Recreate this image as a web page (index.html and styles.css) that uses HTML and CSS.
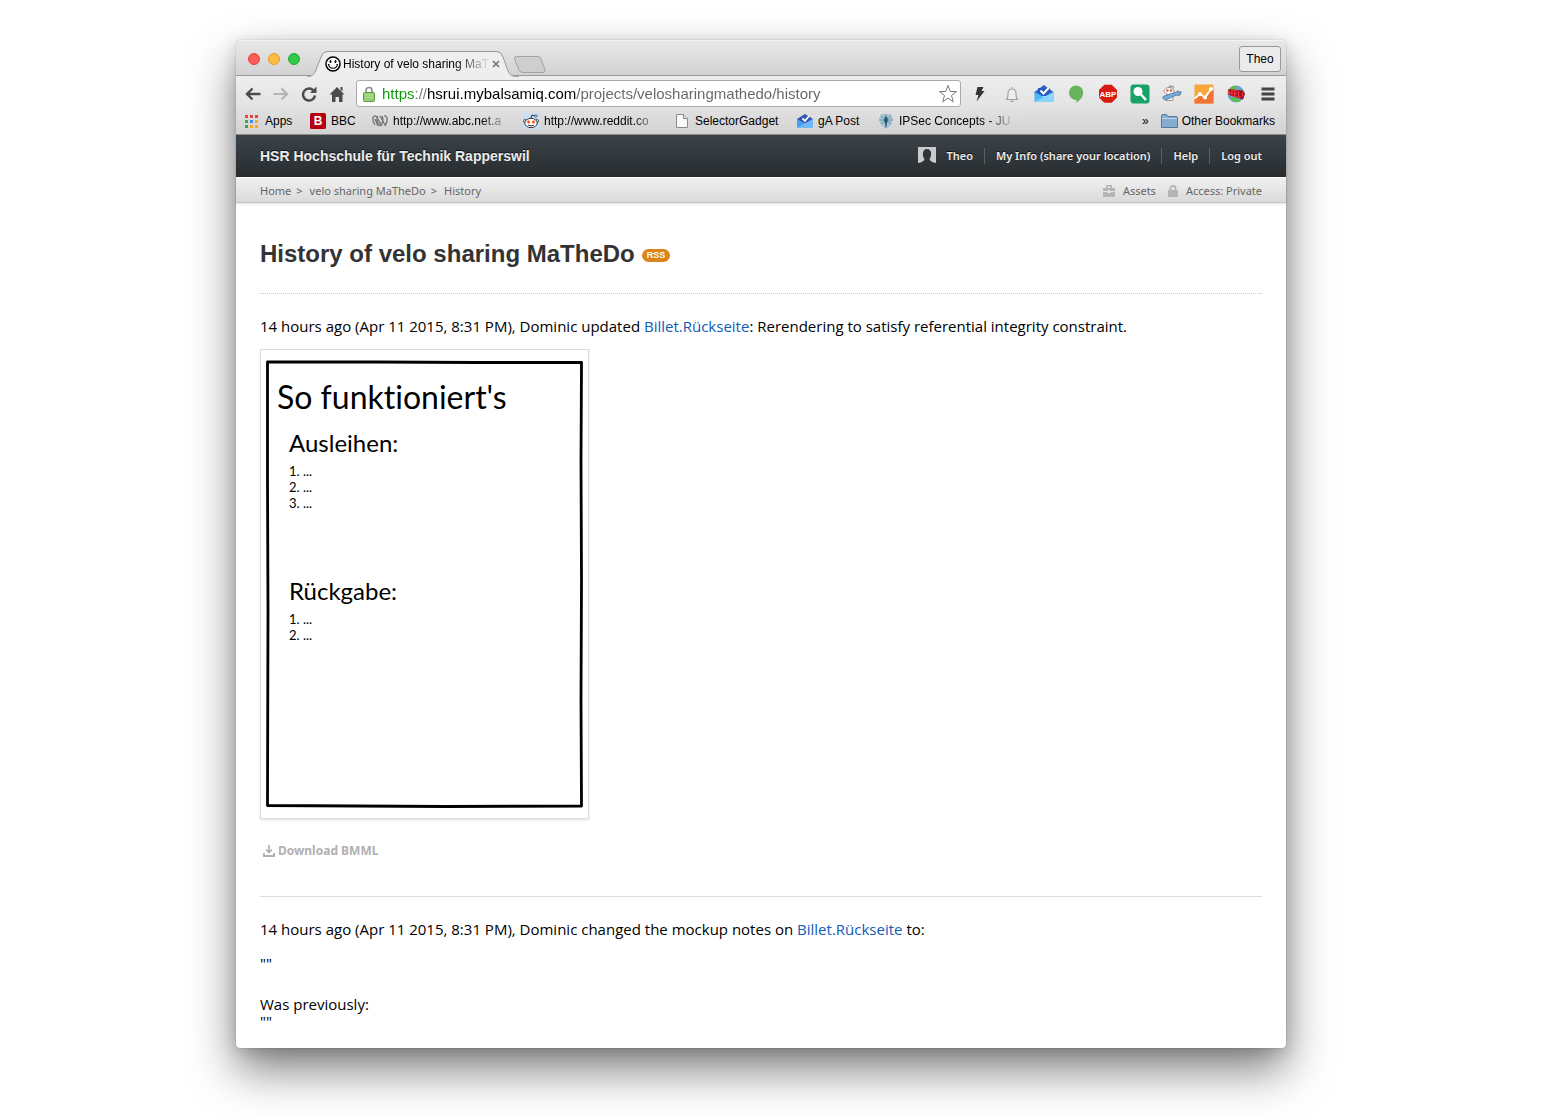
FILE: index.html
```html
<!DOCTYPE html>
<html lang="en">
<head>
<meta charset="utf-8">
<meta name="viewport" content="width=device-width, initial-scale=1">
<title>History of velo sharing MaTheDo</title>
<link rel="stylesheet" href="styles.css">
</head>
<body>
<div class="window">
  <div class="tabstrip">
    <div class="lights">
      <button class="light red" aria-label="Close window"></button>
      <button class="light yellow" aria-label="Minimise window"></button>
      <button class="light green" aria-label="Zoom window"></button>
    </div>
    <div class="tab">
      <svg class="tab-shape" viewBox="0 0 212 26" aria-hidden="true"><path d="M0 26V25.500C5 25.500 7 24 8.500 20L14 6Q16 .5 20 .5H190Q194 .5 196 6L201 20C203 24.500 205 25.500 212 25.500V26Z" fill="#eeeeee"/><path d="M0 25.500C5 25.500 7 24 8.500 20L14 6Q16 .5 20 .5H190Q194 .5 196 6L201 20C203 24.500 205 25.500 212 25.500" fill="none" stroke="#999"/></svg>
      <svg class="icon16 favicon" viewBox="0 0 16 16" aria-hidden="true"><circle cx="8" cy="8" r="7" fill="#fff" stroke="#000" stroke-width="1.500"/><ellipse cx="5.500" cy="5.500" rx="1" ry="1.500"/><ellipse cx="10.500" cy="5.500" rx="1" ry="1.500"/><path d="M3.500 8.500C4.500 13.500 11.500 13.500 12.500 8.500M3 8.500h1.500M11.500 8.500H13" fill="none" stroke="#000" stroke-width="1.200"/></svg>
      <span class="tab-title">History of velo sharing MaT</span>
      <button class="tab-close" aria-label="Close tab"><svg viewBox="0 0 8 8" width="8" height="8"><path d="M1 1l6 6M7 1L1 7" stroke="#777" stroke-width="1.700"/></svg></button>
    </div>
    <button class="new-tab" aria-label="New tab"><svg viewBox="0 0 33 17" width="33" height="17"><path d="M4 .5H25Q27 .5 28 3L32 14Q32.500 16.500 30 16.500H10Q7 16.500 6 14L1.500 3Q1 .5 4 .5Z" fill="#cecece" stroke="#a2a2a2"/></svg></button>
    <button class="profile">Theo</button>
  </div>

  <div class="toolbar">
    <div class="nav">
      <button aria-label="Back"><svg class="icon16" viewBox="0 0 16 16"><path d="M15.500 8H2M7.500 2.500L2 8l5.500 5.500" fill="none" stroke="#4c4c4c" stroke-width="2.400"/></svg></button>
      <button aria-label="Forward"><svg class="icon16" viewBox="0 0 16 16"><path d="M.5 8H14M8.500 2.500L14 8l-5.500 5.500" fill="none" stroke="#b4b4b4" stroke-width="2.200"/></svg></button>
      <button aria-label="Reload"><svg class="icon16" viewBox="0 0 16 16"><path d="M12.500 4.500A6 6 0 1 0 14 9.500" fill="none" stroke="#4c4c4c" stroke-width="2.500"/><path d="M15.500 .5V7H9Z" fill="#4c4c4c"/></svg></button>
      <button aria-label="Home"><svg class="icon16" viewBox="0 0 16 16"><path d="M8 1L15.500 8.500H13.500V16H10V11H6.500V16H3V8.500H.5ZM11.500 1H13.500V5.500L11.500 3.500Z" fill="#4c4c4c"/></svg></button>
    </div>
    <form class="omnibox">
      <svg class="lock" viewBox="0 0 12 16" width="12" height="16" aria-hidden="true"><path d="M3 7V4.500a3 3 0 0 1 6 0V7" fill="none" stroke="#8c8c8c" stroke-width="1.700"/><rect x=".5" y="6.500" width="11" height="9" rx="1" fill="#97d077" stroke="#579e3f"/><path d="M2 9h8M2 11.500h8" stroke="#b2e297"/></svg>
      <input class="url" type="text" aria-label="Address" value="https://hsrui.mybalsamiq.com/projects/velosharingmathedo/history">
      <button type="button" aria-label="Bookmark this page"><svg viewBox="0 0 20 20" width="20" height="20"><path d="M10 1.500l2.300 6h6.200l-5 4 1.800 6.300L10 14.200l-5.300 3.600 1.800-6.300-5-4h6.200Z" fill="#fff" stroke="#777" stroke-linejoin="round"/></svg></button>
    </form>
    <div class="extensions">
      <button aria-label="Lightning"><svg viewBox="0 0 20 20"><path d="M7.500 3H13.500L11.500 7H14.500L6.500 17.500L8.500 11H5.500Z" fill="#333"/></svg></button>
      <button aria-label="Notifications"><svg viewBox="0 0 20 20"><path d="M4.500 15.500C6 14 6 12 6 9.500Q6 5 10 5T14 9.500C14 12 14 14 15.500 15.500ZM10 5V3" fill="#eee" stroke="#a5a5a5" stroke-width="1.200"/><path d="M8.500 16.500h3v1.500h-3Z" fill="#a5a5a5"/></svg></button>
      <button aria-label="Inbox"><svg viewBox="0 0 20 20"><path d="M.5 8L10 1l9.500 7-1 4H1Z" fill="#3062c6"/><path d="M4 4h12v8H4Z" fill="#295ac3"/><path d="M.5 8L10 13l9.500-5V18H.5Z" fill="#4db9f5"/><path d="M.5 18L19.500 8V18Z" fill="#8bd5fa"/><path d="M6.500 6.500l3 3 5.500-6" fill="none" stroke="#fff" stroke-width="2"/></svg></button>
      <button aria-label="Hangouts"><svg viewBox="0 0 20 20"><path d="M10 1.500a7.200 7.200 0 0 1 7.200 7.200c0 4.300-3.200 7.500-6.800 10V15.900A7.200 7.200 0 1 1 10 1.500Z" fill="#69b35d"/></svg></button>
      <button aria-label="Adblock Plus"><svg viewBox="0 0 20 20"><path d="M6.300 .8h7.400l5.300 5.300v7.400l-5.300 5.300H6.300L1 13.500V6.100Z" fill="#d71a12"/><text x="10" y="13" text-anchor="middle" class="abp">ABP</text></svg></button>
      <button aria-label="Search"><svg viewBox="0 0 20 20"><rect x=".5" y=".5" width="19" height="19" rx="3" fill="#17a367"/><circle cx="8" cy="7.500" r="4.500" fill="#fff"/><path d="M11 10.500l5 5.500" stroke="#fff" stroke-width="2.500"/></svg></button>
      <button aria-label="Reddit enhancement"><svg viewBox="0 0 20 20"><path d="M7 5l.5-3 3 .5" stroke="#777" fill="none"/><circle cx="11" cy="3" r="1" fill="#fff" stroke="#777" stroke-width=".6"/><ellipse cx="7" cy="7" rx="5" ry="3.500" fill="#f6f6f6" stroke="#888" stroke-width=".8"/><circle cx="5.300" cy="6.500" r="1.200" fill="#e9622f"/><circle cx="9" cy="6.500" r="1.200" fill="#e9622f"/><path d="M4 11h7v5.500H4Z" fill="#eee" stroke="#888" stroke-width=".8"/><path d="M1 12.500L14.500 8l1.500-1.500v2l3-1v1.500l-1.500 1.500h1l-3 1.500-1-1L3.500 16 1 14.500Z" fill="#78aed8" stroke="#47759a" stroke-width=".8"/></svg></button>
      <button aria-label="Analytics"><svg viewBox="0 0 20 20"><path d="M.5 .5h19v19H.5Z" fill="#f9a63a"/><path d="M.5 15l6-4 5 3 8-9v14.500H.5Z" fill="#f27435"/><path d="M.5 14.500L6 10l5 3.500L17 5" fill="none" stroke="#fff" stroke-width="1.700"/><circle cx="6" cy="10" r="2" fill="#fff"/><circle cx="11" cy="13.500" r="2" fill="#fff"/><circle cx="17" cy="5" r="2" fill="#fff"/></svg></button>
      <button aria-label="Hello"><svg viewBox="0 0 20 20"><circle cx="10" cy="10" r="8.500" fill="#6fa0e0"/><path d="M4 4q3-3 7-2l-2 4-5 1ZM3 13l8 1 4 3q-7 3-12-4M14 4l4 4-3 1Z" fill="#55c443"/><path d="M2 5l14.500 1.500 2.500 3-2 6L3 11Z" fill="#8c1220"/><path d="M3 5v6M6 5.500v6M3 8.500l3 .5M11 6.500H8.500v6H11M8.500 9.500H11M12.500 7v6h2M16.500 8.500v4" fill="none" stroke="#f5303a" stroke-width="1.400"/></svg></button>
      <button aria-label="Menu"><svg viewBox="0 0 20 20"><path d="M3.500 5h13M3.500 10h13M3.500 15h13" stroke="#444" stroke-width="2.800"/></svg></button>
    </div>
  </div>

  <nav class="bookmarks" aria-label="Bookmarks">
    <a href="#" class="bm apps"><svg viewBox="0 0 14 14" width="14" height="14" aria-hidden="true"><path d="M0 1h3v3H0zM5 1h3v3H5zM10 1h3v3h-3z" fill="#e8453c"/><path d="M0 6h3v3H0z" fill="#35a854"/><path d="M5 6h3v3H5z" fill="#4688f1"/><path d="M10 6h3v3h-3zM5 11h3v3H5zM10 11h3v3h-3z" fill="#f9a825"/><path d="M0 11h3v3H0z" fill="#35a854"/></svg>Apps</a>
    <a href="#" class="bm bbc"><svg class="icon16" viewBox="0 0 16 16" aria-hidden="true"><rect width="16" height="16" rx="1.500" fill="#b5000f"/><text x="8" y="12" text-anchor="middle" class="bbc-b">B</text></svg>BBC</a>
    <a href="#" class="bm abc"><svg class="icon16" viewBox="0 0 16 16" aria-hidden="true"><path d="M4 3C0 2 0 8 3 12M4 3l6 10M3 6l3 7M8 3l5 9M12 3c4-1 4 5 1 10M6 3c-2 4 0 8 2 10M10 3c2 4 0 8-2 10" fill="none" stroke="#777" stroke-width="1.400"/></svg><span class="fade">http://www.abc.net.a</span></a>
    <a href="#" class="bm reddit"><svg class="icon16" viewBox="0 0 16 16" aria-hidden="true"><path d="M0 0h16v16H0z" fill="#c7e0f8"/><path d="M8 5l1-3 3 1" fill="none" stroke="#333"/><circle cx="2" cy="8" r="1.500" fill="#fff" stroke="#333" stroke-width=".8"/><circle cx="14" cy="8" r="1.500" fill="#fff" stroke="#333" stroke-width=".8"/><circle cx="13" cy="3" r="1.200" fill="#fff" stroke="#333" stroke-width=".7"/><ellipse cx="8" cy="10" rx="6.200" ry="4.700" fill="#fff" stroke="#333"/><circle cx="5.500" cy="9" r="1.400" fill="#ff4500"/><circle cx="10.500" cy="9" r="1.400" fill="#ff4500"/><path d="M5 12q3 2 6 0" fill="none" stroke="#333"/></svg><span class="fade">http://www.reddit.co</span></a>
    <a href="#" class="bm gadget"><svg class="icon16" viewBox="0 0 16 16" aria-hidden="true"><path d="M2.500 1.500h7l4 4v9h-11Z" fill="#fafafa" stroke="#8a8a8a"/><path d="M9.500 1.500v4h4" fill="#ddd" stroke="#8a8a8a"/></svg>SelectorGadget</a>
    <a href="#" class="bm ga"><svg class="icon16" viewBox="0 0 16 16" aria-hidden="true"><path d="M0 6l8-5 8 5-1 4H1Z" fill="#2f56b4"/><path d="M5.500 5.500l2.500 2.500 4-5" fill="none" stroke="#fff" stroke-width="1.800"/><path d="M0 6l8 4.500L16 6v9H0Z" fill="#4b9df4"/><path d="M0 15L16 6v9Z" fill="#71b9f8"/></svg>gA Post</a>
    <a href="#" class="bm ipsec"><svg class="icon16" viewBox="0 0 16 16" aria-hidden="true"><path d="M3 1h10l2 5-2 6-5 4-5-4-2-6Z" fill="#a6c4d2"/><path d="M8 1v14M3 3l10 8M13 3L3 11M1 7h14" stroke="#5d8ca3" stroke-width=".8"/><path d="M8 3q3 3 1 7l-1 5-1-5Q5 6 8 3Z" fill="#24566e"/></svg><span class="fade">IPSec Concepts - JU</span></a>
    <button class="more" aria-label="More bookmarks">»</button>
    <a href="#" class="bm other"><svg viewBox="0 0 17 14" width="17" height="14" aria-hidden="true"><path d="M.5 13.500V2Q.5 .5 2 .5H5.500L7 2.500H15Q16.500 2.500 16.500 4V13.500Z" fill="#86add0" stroke="#54799d"/><path d="M1 4.500h15" stroke="#bdd4e8"/></svg>Other Bookmarks</a>
  </nav>

  <header class="site-header">
    <a class="brand" href="#">HSR Hochschule für Technik Rapperswil</a>
    <nav class="account" aria-label="Account">
      <a href="#" class="user"><svg viewBox="0 0 18 18" width="18" height="18" aria-hidden="true"><path d="M0 0h18v16H0Z" fill="#c9cbcc"/><path d="M0 18v-2q6-1 6.500-4C4 9 4 2 9 2s5 7 2.500 10q.5 3 6.500 4v2Z" fill="#2f3336"/></svg>Theo</a>
      <a href="#">My Info (share your location)</a>
      <a href="#">Help</a>
      <a href="#">Log out</a>
    </nav>
  </header>

  <div class="subbar">
    <nav class="crumbs" aria-label="Breadcrumb"><a href="#">Home</a><span class="sep">&gt;</span><a href="#">velo sharing MaTheDo</a><span class="sep">&gt;</span><a href="#">History</a></nav>
    <nav class="tools" aria-label="Project">
      <a href="#"><svg viewBox="0 0 12 12" width="12" height="12" aria-hidden="true"><path d="M3 3V0h6v3h3v3H7V5H5v1H0V3h3zm1.500 0h3V1.500h-3zM0 7h4v1h4V7h4v5H0z" fill="#b5b5b5" fill-rule="evenodd"/></svg>Assets</a>
      <a href="#"><svg viewBox="0 0 10 12" width="10" height="12" aria-hidden="true"><path d="M0 5h10v7H0z" fill="#b5b5b5"/><path d="M2.500 5V3a2.500 2 0 0 1 5 0v2" fill="none" stroke="#b5b5b5" stroke-width="1.800"/></svg>Access: Private</a>
    </nav>
  </div>

  <main class="content">
    <div class="heading"><h1>History of velo sharing MaTheDo</h1><a class="rss" href="#">RSS</a></div>
    <article class="entry">
      <p>14 hours ago (Apr 11 2015, 8:31 PM), Dominic updated <a href="#">Billet.Rückseite</a>: Rerendering to satisfy referential integrity constraint.</p>
      <div class="mockup">
        <svg class="sketch" viewBox="0 0 318 449" preserveAspectRatio="none" aria-hidden="true"><path d="M1.500 2L110 2 210 2.500 315.500 2.500 315 100 315.500 220 315 340 315.500 446 180 446.500 90 446 1.500 445.500 2 250 1.500 120Z" fill="none" stroke="#000" stroke-width="2.800" stroke-linejoin="round"/></svg>
        <h2>So funktioniert's</h2>
        <section class="steps">
          <h3>Ausleihen:</h3>
          <ol><li>1. ...</li><li>2. ...</li><li>3. ...</li></ol>
        </section>
        <section class="steps">
          <h3>Rückgabe:</h3>
          <ol><li>1. ...</li><li>2. ...</li></ol>
        </section>
      </div>
      <a class="download" href="#"><svg viewBox="0 0 12 12" width="12" height="12" aria-hidden="true"><path d="M1 8v3h10V8" fill="none" stroke="#b0b0b0" stroke-width="2"/><path d="M6 0v7M3 4.500l3 3 3-3" fill="none" stroke="#b0b0b0" stroke-width="1.700"/></svg>Download BMML</a>
    </article>
    <article class="entry second">
      <p>14 hours ago (Apr 11 2015, 8:31 PM), Dominic changed the mockup notes on <a href="#">Billet.Rückseite</a> to:</p>
      <p class="note">""</p>
      <p class="note">Was previously:<br>""</p>
    </article>
  </main>
</div>
</body>
</html>
```
FILE: styles.css
```css
* { box-sizing: border-box; }

body {
  margin: 0;
  padding: 40px 0 71px;
  display: grid;
  grid-template-columns: minmax(0, 236fr) minmax(0, 1050fr) minmax(0, 261fr);
  background: #fff;
  color: #000;
  font: 14px/16px "Noto Sans", "Lucida Grande", sans-serif;
}

a { color: inherit; text-decoration: none; }
button { padding: 0; border: 0; background: none; font: inherit; color: inherit; display: flex; }
svg { display: block; flex: none; }
.icon16 { width: 16px; height: 16px; }

.window {
  grid-column: 2;
  border-radius: 5px 5px 4px 4px;
  background: #fff;
  box-shadow: 0 0 1px rgba(0, 0, 0, .5), 0 22px 46px rgba(0, 0, 0, .5), 0 4px 16px rgba(0, 0, 0, .15);
}

/* Browser frame */
.tabstrip {
  display: flex;
  height: 36px;
  padding: 0 5px 0 12px;
  border-bottom: 1px solid #999;
  border-top: 1px solid #f4f4f4;
  border-radius: 5px 5px 0 0;
  background: linear-gradient(#e8e8e8, #d2d2d2);
  font: 12px/16px "Liberation Sans", sans-serif;
}
.lights { display: flex; gap: 8px; padding-top: 12px; width: 63px; }
.light { width: 12px; height: 12px; border-radius: 50%; }
.red { background: #fc5b57; border: 1px solid #e2463f; }
.yellow { background: #fdbc40; border: 1px solid #e0a028; }
.green { background: #34c84a; border: 1px solid #20ac32; }
.tab {
  position: relative;
  display: flex;
  align-items: center;
  gap: 2px;
  width: 208px;
  height: 26px;
  margin-top: 10px;
  padding-left: 14px;
}
.tab-shape { position: absolute; left: -4px; top: 0; width: 212px; height: 26px; }
.favicon, .tab-title, .tab-close { position: relative; }
.tab-title {
  width: 147px;
  white-space: nowrap;
  -webkit-mask-image: linear-gradient(90deg, #000 112px, transparent);
  mask-image: linear-gradient(90deg, #000 112px, transparent);
}
.new-tab { margin: 15px 0 0 -6px; height: 17px; }
.profile {
  margin: 5px 0 0 auto;
  width: 42px;
  height: 26px;
  justify-content: center;
  align-items: center;
  border: 1px solid #999;
  border-radius: 3px;
  background: #ebebeb;
}

.toolbar {
  display: flex;
  align-items: center;
  height: 33px;
  padding: 2px 8px 0 9px;
  background: linear-gradient(#eee, #e2e2e2);
}
.nav { display: flex; gap: 12px; width: 111px; }
.omnibox {
  display: flex;
  align-items: center;
  flex: 1;
  height: 27px;
  padding: 0 2px 0 6px;
  border: 1px solid #aaa;
  border-radius: 3px;
  background: #fff;
}
.url {
  flex: 1;
  min-width: 0;
  height: 20px;
  margin-left: 7px;
  padding: 0;
  border: 0;
  outline: 0;
  font: 15px/20px "Liberation Sans", sans-serif;
  color: transparent;
  background: linear-gradient(90deg, #0a9a0a 33px, #777 33px 45px, #000 45px 194px, #666 194px);
  -webkit-background-clip: text;
  background-clip: text;
}
.extensions { display: flex; gap: 12px; padding-left: 9px; }
.extensions svg { width: 20px; height: 20px; }
.abp { font: bold 8px "Liberation Sans", sans-serif; fill: #fff; }
.bbc-b { font: bold 12px "Liberation Sans", sans-serif; fill: #fff; }

.bookmarks {
  display: flex;
  align-items: center;
  height: 26px;
  padding: 0 11px 1px 9px;
  border-bottom: 1px solid #8a8a8a;
  background: linear-gradient(#e1e1e1, #d2d2d2);
  font: 12px/16px "Liberation Sans", sans-serif;
  white-space: nowrap;
}
.bm { display: flex; align-items: center; gap: 5px; flex: none; }
.apps { width: 65px; gap: 6px; }
.bbc { width: 62px; }
.abc, .reddit { width: 151px; }
.gadget { width: 123px; }
.ga { width: 81px; }
.ipsec { width: 150px; }
.fade {
  width: 116px;
  -webkit-mask-image: linear-gradient(90deg, #000 88px, transparent);
  mask-image: linear-gradient(90deg, #000 88px, transparent);
}
.more { margin-left: auto; }
.other { margin-left: 12px; gap: 4px; }

/* Site header */
.site-header {
  display: flex;
  align-items: center;
  justify-content: space-between;
  height: 42px;
  padding: 0 24px;
  background: linear-gradient(#3b4349, #282c2f);
  color: #ececec;
  text-shadow: 0 -1px 0 #111;
}
.brand { font: bold 14px/18px "Liberation Sans", sans-serif; }
.account { display: flex; align-items: center; font-size: 11px; font-weight: 600; }
.account a { padding: 0 11px; border-left: 1px solid #5b6063; line-height: 16px; }
.account a:last-child { padding-right: 0; }
.account .user { display: flex; align-items: center; gap: 10px; border: 0; }

.subbar {
  display: flex;
  align-items: center;
  justify-content: space-between;
  height: 26px;
  padding: 1px 24px 0;
  border-top: 1px solid #fff;
  border-bottom: 1px solid #c4c4c4;
  background: linear-gradient(#f0f0f0, #dadada);
  box-shadow: 0 1px 2px rgba(0, 0, 0, .12);
  color: #666;
  font-size: 11px;
}
.crumbs, .tools, .tools a { display: flex; align-items: center; }
.sep { margin: 0 7px 0 5px; }
.tools { gap: 12px; }
.tools a { gap: 8px; }

.content { padding: 0 24px 18px; }
.heading {
  display: flex;
  align-items: center;
  gap: 7px;
  height: 91px;
  padding-top: 12px;
  border-bottom: 1px dotted #ccc;
}
h1 { margin: 0; color: #333; font: bold 24px/28px "Liberation Sans", sans-serif; }
.rss {
  margin-top: 2px;
  padding: 0 5px;
  border-radius: 7px;
  background: #dd8418;
  color: #fff;
  font: bold 9px/13px "Liberation Sans", sans-serif;
}

.entry { padding-top: 24px; }
.entry p { margin: 0; font: 15px/16px "Open Sans", "Lucida Grande", sans-serif; }
.entry p a { color: #105cb6; }
.mockup {
  position: relative;
  width: 329px;
  height: 470px;
  margin-top: 15px;
  padding: 31px 16px;
  border: 1px solid #ddd;
  box-shadow: 0 1px 2px rgba(0, 0, 0, .12);
  font-family: Lato, sans-serif;
  font-variant-ligatures: none;
}
.sketch { position: absolute; left: 5px; top: 10px; width: 318px; height: 449px; }
.mockup h2 { margin: 0; font-size: 32px; line-height: 32px; font-weight: 400; }
.steps { height: 148px; padding: 16px 0 0 12px; }
.steps h3 { margin: 0; font-size: 24px; line-height: 28px; font-weight: 400; }
.steps ol { margin: 6px 0 0; padding: 0; list-style: none; font-size: 13px; line-height: 16px; }
.download {
  display: flex;
  align-items: center;
  gap: 3px;
  margin-top: 24px;
  padding-left: 3px;
  color: #b0b0b0;
  font-size: 12px;
  font-weight: 700;
}
.second { margin-top: 37px; border-top: 1px solid #ddd; }
.entry .note { margin-top: 18px; line-height: 17px; }
.entry .note + .note { margin-top: 24px; }
```
